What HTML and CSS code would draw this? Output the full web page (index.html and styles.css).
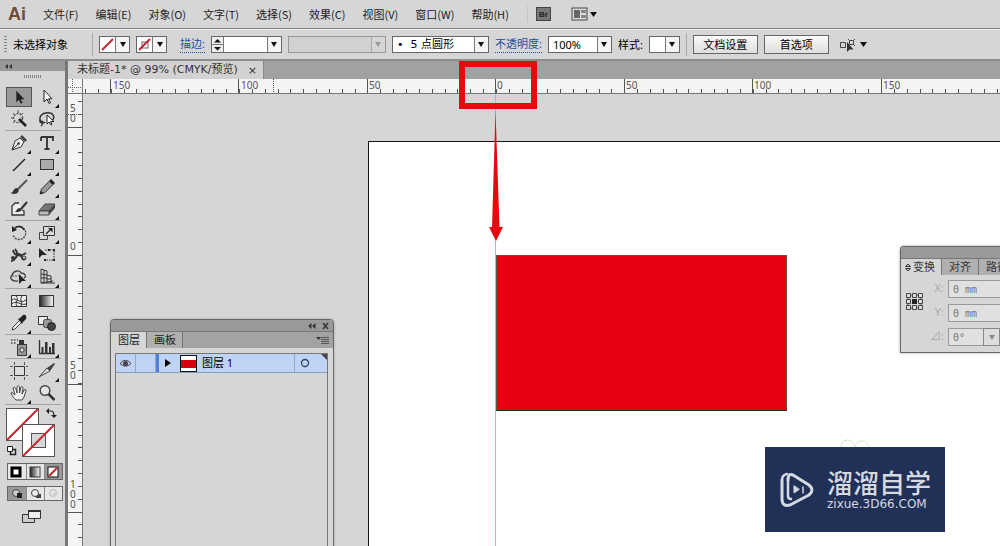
FILE: index.html
```html
<!DOCTYPE html>
<html lang="zh-CN">
<head>
<meta charset="utf-8">
<title>未标题-1*</title>
<link rel="stylesheet" href="styles.css">
</head>
<body>
<div class="app">
  <nav class="menubar">
    <span class="logo">Ai</span>
    <div class="menus">
      <button>文件(F)</button><button>编辑(E)</button><button>对象(O)</button><button>文字(T)</button><button>选择(S)</button><button>效果(C)</button><button>视图(V)</button><button>窗口(W)</button><button>帮助(H)</button>
    </div>
    <button class="bridge">Br</button>
    <button class="arrange" aria-label="排列文档">
      <svg width="26" height="14" viewBox="0 0 26 14"><rect x="1" y="1" width="15" height="12" fill="#ddd" stroke="#444"/><path d="M3 3h6v8H3z" fill="#666"/><path d="M10 3h5v3h-5zM10 8h5v3h-5z" fill="#888"/><path d="M19 5h7l-3.500 5z" fill="#111"/></svg>
    </button>
  </nav>

  <div class="controlbar">
    <i class="grip"></i>
    <span class="selection">未选择对象</span>
    <div class="controls">
      <button class="swatch" aria-label="填色"><svg width="15" height="15"><path d="M2 13L13 2" stroke="#c1272d" stroke-width="2"/></svg><i class="caret"></i></button>
      <button class="swatch" aria-label="描边颜色"><svg width="15" height="15"><rect x="5" y="5" width="6" height="6" fill="none" stroke="#666"/><path d="M2 13L13 2" stroke="#c1272d" stroke-width="2"/></svg><i class="caret"></i></button>
      <label class="link stroke-label" for="weight">描边:</label>
      <span class="spin"><button class="step" aria-label="增减"><svg width="11" height="15"><path d="M2 5.500L5.500 2 9 5.500zM2 10L5.500 13.500 9 10z" fill="#111"/><path d="M0 7.500h11" stroke="#777"/></svg></button><input id="weight" type="text"><i class="caret"></i></span>
      <span class="combo off"><select disabled aria-label="变量宽度"><option></option></select><i class="caret"></i></span>
      <span class="combo brush"><select aria-label="画笔定义"><option>•&nbsp; 5 点圆形</option></select><i class="caret"></i></span>
      <label class="link" for="opacity">不透明度:</label>
      <span class="combo opacity"><select id="opacity"><option>100%</option></select><i class="caret"></i></span>
      <label for="style">样式:</label>
      <button id="style" class="swatch" aria-label="样式"><svg width="15" height="15"></svg><i class="caret"></i></button>
    </div>
    <div class="actions">
      <button class="push">文档设置</button>
      <button class="push">首选项</button>
      <button class="similar" aria-label="选择类似的对象"><svg width="28" height="16" viewBox="0 0 28 16"><path d="M1.500 5.500h5v5h-5zM10.500 3.500h4v4h-4zM9 2l1.500 1.500M16 2l-1.500 1.500M16 9l-1.500-1.500" fill="none" stroke="#444"/><path d="M8 5v10l2.500-2.500h4z" fill="#333"/><path d="M21 5h7l-3.500 5z" fill="#111"/></svg></button>
    </div>
  </div>

  <div class="work">
    <aside class="toolbox">
      <button class="collapse" aria-label="折叠"><svg width="9" height="5"><path d="M4 0v5L1 2.500zM8 0v5L5 2.500z" fill="#333"/></svg></button>
      <i class="handle"></i>
      <div class="tools">
        <button class="tool on" aria-label="选择"><svg viewBox="0 0 20 20"><path d="M7 3v13l3-3 2 4.500 2-1-2-4h4z" fill="#222"/></svg></button>
        <button class="tool more" aria-label="直接选择"><svg viewBox="0 0 20 20"><path d="M7 3v12l3-3 2 4.500 1.500-.7-2-4H15z" fill="#fff" stroke="#222"/></svg></button>
        <button class="tool" aria-label="魔棒"><svg viewBox="0 0 20 20"><circle cx="9" cy="9" r="4.500" fill="none" stroke="#555" stroke-width="1.500" stroke-dasharray="2 1.200"/><path d="M9 1v3M2 9h2M4 4l1.500 1.500M14 4l-1.500 1.500M4 14l1.500-1.500" stroke="#555"/><path d="M10 10l7 7" stroke="#222" stroke-width="2.500"/></svg></button>
        <button class="tool" aria-label="套索"><svg viewBox="0 0 20 20"><path d="M6 13c-5-1-4-8 3-9 8-1 10 5 5 8M3 11c-1 3 3 4 5 2M6 12c-1 2 0 4-2 5" fill="none" stroke="#333" stroke-width="1.500"/><path d="M10 6v9l2-2 2 3 1-.5-1.500-3H17z" fill="#fff" stroke="#222"/></svg></button>
      </div>
      <div class="tools">
        <button class="tool more" aria-label="钢笔"><svg viewBox="0 0 20 20"><path d="M3 17l3-9 5-3 4 4-3 5z" fill="#eee" stroke="#333"/><path d="M11 4l2-2 5 5-2 2z" fill="#444"/><path d="M3 17l6-6" stroke="#333"/><circle cx="9.500" cy="10.500" r="1.300" fill="#333"/></svg></button>
        <button class="tool more" aria-label="文字"><svg viewBox="0 0 20 20"><path d="M4 4h12v4M4 4v4M10 4v12M7.500 16h5" fill="none" stroke="#333" stroke-width="1.800"/></svg></button>
        <button class="tool more" aria-label="直线段"><svg viewBox="0 0 20 20"><path d="M4 16L16 4" stroke="#222" stroke-width="1.400"/></svg></button>
        <button class="tool more" aria-label="矩形"><svg viewBox="0 0 20 20"><rect x="3.500" y="4.500" width="13" height="10" fill="#aaa" stroke="#333"/></svg></button>
        <button class="tool" aria-label="画笔"><svg viewBox="0 0 20 20"><path d="M18 3L9 12" stroke="#555" stroke-width="2"/><path d="M1 16c4 0 3-5 7-5 3 1 2 6-3 6z" fill="#333"/></svg></button>
        <button class="tool more" aria-label="铅笔"><svg viewBox="0 0 20 20"><path d="M3 17l1.500-5 8-8 3.500 3.500-8 8z" fill="#999" stroke="#333"/><path d="M12 4l2-2 4 4-2 2zM3 17l1-3 2 2z" fill="#222"/></svg></button>
        <button class="tool" aria-label="斑点画笔"><svg viewBox="0 0 20 20"><path d="M10 4H6l-3 3v9h12v-4l-2-1" fill="#eee" stroke="#333" stroke-width="1.300"/><path d="M18 3l-6 7" stroke="#333" stroke-width="2"/><path d="M5 13c3 0 2-4 6-4 3 1 1 4-2 4z" fill="#333"/></svg></button>
        <button class="tool more" aria-label="橡皮擦"><svg viewBox="0 0 20 20"><path d="M2 12l6-7h10l-6 7z" fill="#777" stroke="#444"/><path d="M2 12h10v4H2z" fill="#bbb" stroke="#444"/><path d="M12 12l6-7v4l-6 7z" fill="#444"/></svg></button>
      </div>
      <div class="tools">
        <button class="tool more" aria-label="旋转"><svg viewBox="0 0 20 20"><path d="M6 5a6.500 6.500 0 1 1-2 7" fill="none" stroke="#444" stroke-width="1.300" stroke-dasharray="2 1"/><path d="M6 5c4-3 8-1 9 2" fill="none" stroke="#222" stroke-width="1.600"/><path d="M3 3v6l5-2z" fill="#222"/></svg></button>
        <button class="tool more" aria-label="比例缩放"><svg viewBox="0 0 20 20"><path d="M2.500 9.500h8v7h-8z" fill="none" stroke="#444"/><path d="M6.500 3.500h11v9h-11z" fill="#ddd" stroke="#333"/><path d="M9 11l5-5" stroke="#222" stroke-width="1.300"/><path d="M11 5h4.500v4.500z" fill="#222"/></svg></button>
        <button class="tool more" aria-label="宽度"><svg viewBox="0 0 20 20"><path d="M2 16c6 0 4-7 8-7s1 7 6 5M4 5c1 5 6 8 13 3M6 4c2 2 3 5 1 9" fill="none" stroke="#333" stroke-width="1.800"/><circle cx="4" cy="13" r="2" fill="#333"/><circle cx="15" cy="13" r="2" fill="none" stroke="#333"/></svg></button>
        <button class="tool" aria-label="自由变换"><svg viewBox="0 0 20 20"><path d="M8 5h9v10H8" fill="none" stroke="#333" stroke-dasharray="1.500 1"/><path d="M2 3v10l3-3h5z" fill="#222"/><path d="M7 14h2v2H7zM16 14h2v2h-2zM16 4h2v2h-2zM11 4h2v2h-2z" fill="#222"/></svg></button>
        <button class="tool more" aria-label="形状生成器"><svg viewBox="0 0 20 20"><path d="M9 14c-6 1-9-3-6-6 2-5 8-5 9-2 5 0 5 4 3 5" fill="none" stroke="#444" stroke-width="1.300"/><path d="M3 9h9" stroke="#444" stroke-dasharray="2 1"/><path d="M10 7v10l3-3h4z" fill="#222"/></svg></button>
        <button class="tool more" aria-label="透视网格"><svg viewBox="0 0 20 20"><path d="M4 2v14h14M4 2l6 2v12M7 3v13M4 7l6 1M4 11h6M10 8l4 1v7M10 12h4M4 16l12-2" fill="none" stroke="#333"/></svg></button>
      </div>
      <div class="tools">
        <button class="tool" aria-label="网格"><svg viewBox="0 0 20 20"><path d="M2.500 4.500h15v11h-15z" fill="#eee" stroke="#333"/><path d="M3 9c4-4 7 5 14 0M3 13c4-5 8 2 14 0M7 5c4 4-2 6 1 10M13 5c-3 3 1 7-1 10" fill="none" stroke="#333"/></svg></button>
        <button class="tool" aria-label="渐变"><svg viewBox="0 0 20 20"><defs><linearGradient id="g"><stop stop-color="#222"/><stop offset="1" stop-color="#fff"/></linearGradient></defs><rect x="2.500" y="4.500" width="14" height="11" fill="url(#g)" stroke="#333"/></svg></button>
        <button class="tool more" aria-label="吸管"><svg viewBox="0 0 20 20"><path d="M3 17l1-3 7-7 2 2-7 7z" fill="#eee" stroke="#444"/><path d="M9 6l2-1 3-3c3-1 4 2 3 4l-3 3-1 2z" fill="#222"/></svg></button>
        <button class="tool" aria-label="混合"><svg viewBox="0 0 20 20"><path d="M1.500 3.500h9v8h-9z" fill="#eee" stroke="#333"/><rect x="6.500" y="6.500" width="8" height="8" rx="2" fill="#999" stroke="#444"/><circle cx="14.500" cy="13.500" r="4" fill="#444" stroke="#222"/></svg></button>
      </div>
      <div class="tools">
        <button class="tool more" aria-label="符号喷枪"><svg viewBox="0 0 20 20"><path d="M2 3h7M2 6h6" stroke="#444" stroke-width="1.500" stroke-dasharray="1.500 1.500"/><path d="M8.500 7.500h9v11h-9z" fill="#999" stroke="#333"/><path d="M10 3h5v4h-5z" fill="#333"/><circle cx="13" cy="13" r="2.200" fill="#ddd" stroke="#333"/></svg></button>
        <button class="tool more" aria-label="柱形图"><svg viewBox="0 0 20 20"><path d="M2.500 3v13.500H18" fill="none" stroke="#333" stroke-width="1.300"/><path d="M4.500 10h2v6h-2zM8 5h2.500v11H8zM12 10h2v6h-2zM15 6h2.500v10H15z" fill="#333"/></svg></button>
      </div>
      <div class="tools">
        <button class="tool" aria-label="画板"><svg viewBox="0 0 20 20"><path d="M5.500 5.500h10v9h-10z" fill="#ddd" stroke="#333"/><path d="M5.500 1v3M15.500 1v3M5.500 16v3M15.500 16v3M1 5.500h3M1 14.500h3M17 5.500h2M17 14.500h2" stroke="#555"/></svg></button>
        <button class="tool more" aria-label="切片"><svg viewBox="0 0 20 20"><path d="M2 16l8-9 3 3z" fill="#ddd" stroke="#444"/><path d="M10 7l7-5 1 1-5 7z" fill="#444"/></svg></button>
        <button class="tool more" aria-label="抓手"><svg viewBox="0 0 20 20"><path d="M7 17c-2-2-4-4-5-7 1-1 2 0 4 2L4 5c1-1 2-1 3 1l1 4V4c1-2 2-1 2.500 0v6l1.500-6c1-1 2 0 2 1l-1 6 2-4c2-1 2 0 2 1l-2 6-2 3z" fill="#eee" stroke="#444"/></svg></button>
        <button class="tool" aria-label="缩放"><svg viewBox="0 0 20 20"><circle cx="8" cy="7.500" r="4.800" fill="#e4e4e4" stroke="#444" stroke-width="1.400"/><path d="M11.500 11l6 6" stroke="#333" stroke-width="2.500"/></svg></button>
      </div>
      <div class="paint">
        <svg width="54" height="52" viewBox="0 0 54 52">
          <rect x=".5" y="1.500" width="32" height="32" fill="#fff" stroke="#555"/><path d="M1 33L32 2" stroke="#c1272d" stroke-width="2"/>
          <rect x="16.500" y="17.500" width="32" height="32" fill="#fff" stroke="#555"/><rect x="25.500" y="26.500" width="14" height="14" fill="#d6d6d6" stroke="#555"/><path d="M17 49L48 18" stroke="#c1272d" stroke-width="2"/>
          <path d="M42 4h3q3 0 3 5" fill="none" stroke="#222" stroke-width="1.200"/><path d="M40 4l3-3v6zM45 8h6l-3 3z" fill="#222"/>
          <path d="M4.500 42.500h5v5h-5z" fill="#ddd" stroke="#222" stroke-width="1.500"/><path d="M1.500 39.500h5v5h-5z" fill="#fff" stroke="#222"/>
        </svg>
      </div>
      <div class="modes color">
        <button aria-label="颜色"><svg width="16" height="14"><rect x="4" y="3" width="8" height="8" fill="#fff" stroke="#000" stroke-width="3"/></svg></button>
        <button aria-label="渐变色"><svg width="16" height="14"><rect x="3" y="2" width="10" height="10" fill="url(#g)" stroke="#333"/></svg></button>
        <button class="on" aria-label="无"><svg width="16" height="14"><rect x="3" y="2" width="10" height="10" fill="#fff" stroke="#111"/><path d="M4 11l8-8" stroke="#c1272d" stroke-width="2"/></svg></button>
      </div>
      <div class="modes">
        <button class="on" aria-label="正常绘图"><svg width="16" height="13"><circle cx="8" cy="6" r="3.500" fill="#ccc" stroke="#444"/><path d="M9 6h5v5H9z" fill="#222"/></svg></button>
        <button aria-label="背面绘图"><svg width="16" height="13"><path d="M9 7h5v4H9z" fill="#444"/><circle cx="8" cy="6" r="3.500" fill="#eee" stroke="#444"/></svg></button>
        <button aria-label="内部绘图"><svg width="16" height="13"><circle cx="8" cy="6" r="3.500" fill="none" stroke="#bbb"/><path d="M8 6h3v3H8z" fill="#ccc"/></svg></button>
      </div>
      <button class="screen" aria-label="屏幕模式"><svg width="20" height="15"><path d="M.5 5.500h12v8H.5z" fill="#ccc" stroke="#333"/><path d="M6.500 1.500h12v8h-12z" fill="#eee" stroke="#333"/><path d="M6 2h13" stroke="#333" stroke-width="2"/></svg></button>
    </aside>

    <main class="document">
      <div class="tabs"><div class="tab">未标题-1* @ 99% (CMYK/预览)<button aria-label="关闭">×</button></div></div>
      <div class="stage">
        <svg class="corner" width="14" height="14"><path d="M0 8.500h14M4.500 0v14" stroke="#666" stroke-dasharray="1 1"/></svg>
        <svg class="ruler-h" width="100%" height="14" shape-rendering="crispEdges">
          <line x1="2" y1="12" x2="4000" y2="12" stroke="#555" stroke-width="4" stroke-dasharray="1 11.840"/>
          <path d="M27.500 0v14M155.500 0v14M284.500 0v14M412.500 0v14M541.500 0v14M669.500 0v14M798.500 0v14" stroke="#555"/>
          <path d="M190.500 0v14" stroke="#555" stroke-dasharray="1 1"/>
          <g class="marks"><text x="30" y="10">150</text><text x="158" y="10">100</text><text x="286" y="10">50</text><text x="414" y="10">0</text><text x="543" y="10">50</text><text x="671" y="10">100</text><text x="800" y="10">150</text></g>
        </svg>
        <svg class="ruler-v" width="14" height="100%" shape-rendering="crispEdges">
          <line x1="12" y1="7" x2="12" y2="4000" stroke="#555" stroke-width="4" stroke-dasharray="1 11.830"/>
          <path d="M0 33.500h14M0 161.500h14M0 290.500h14M0 418.500h14" stroke="#555"/>
          <path d="M0 20.500h14" stroke="#555" stroke-dasharray="1 1"/>
          <g class="marks"><text x="2" y="18">5</text><text x="2" y="28">0</text><text x="2" y="156">0</text><text x="2" y="275">5</text><text x="2" y="285">0</text><text x="2" y="394">1</text><text x="2" y="404">0</text><text x="2" y="414">0</text></g>
        </svg>
        <div class="canvas">
          <div class="artboard"></div>
          <div class="flag"></div>
          <div class="guide"></div>
        </div>
      </div>
    </main>
  </div>

  <div class="callout"></div>
  <svg class="pointer" width="16" height="132" viewBox="0 0 16 132"><path d="M7.500 0L11.500 117H15L8 131 1 117h3z" fill="#e60a0f"/></svg>

  <section class="panel layers">
    <div class="panel-top"><svg width="22" height="8"><path d="M3.500 1v6L0 4zM7.500 1v6L4 4z" fill="#333"/><path d="M15 1l5 6M20 1l-5 6" stroke="#333" stroke-width="1.500"/></svg></div>
    <div class="panel-tabs"><button class="on">图层</button><button>画板</button><svg width="13" height="8"><path d="M0 1h5L2.500 4z" fill="#333"/><path d="M5 1.500h8M5 3.500h8M5 5.500h8M5 7.500h8" stroke="#555"/></svg></div>
    <div class="layer-list">
      <div class="layer">
        <button class="eye" aria-label="可见性"><svg width="13" height="9"><path d="M1 4.500Q6.500-2 12 4.500 6.500 10 1 4.500z" fill="#ccd" stroke="#445"/><circle cx="6.500" cy="4.500" r="2.500" fill="#445"/></svg></button>
        <i class="lock"></i><i class="bar"></i>
        <svg class="open" width="6" height="8"><path d="M0 0l6 4-6 4z"/></svg>
        <i class="thumb"></i>
        <span class="name">图层 1</span>
        <button class="target" aria-label="定位"><svg width="10" height="10"><circle cx="5" cy="5" r="3.500" fill="none" stroke="#345" stroke-width="1.300"/></svg></button>
      </div>
    </div>
  </section>

  <section class="panel transform">
    <div class="panel-top"></div>
    <div class="panel-tabs"><button class="on"><svg width="6" height="9"><path d="M.5 3.500L3 1l2.500 2.500zM.5 5.500L3 8l2.500-2.500z" fill="none" stroke="#333"/></svg>变换</button><button>对齐</button><button>路径</button></div>
    <div class="fields">
      <svg width="19" height="19" viewBox="0 0 19 19"><path d="M3 3h13v13H3z" fill="none" stroke="#555"/><path d="M1.500 1.500h4v4h-4zM7.500 1.500h4v4h-4zM13.500 1.500h4v4h-4zM1.500 7.500h4v4h-4zM13.500 7.500h4v4h-4zM1.500 13.500h4v4h-4zM7.500 13.500h4v4h-4zM13.500 13.500h4v4h-4z" fill="#ddd" stroke="#444"/><path d="M7 7h5v5H7z" fill="#222"/></svg>
      <div class="rows">
        <label>X:<input type="text" value="0 mm"></label>
        <label>Y:<input type="text" value="0 mm"></label>
        <label>⊿:<input class="angle" type="text" value="0°"><i class="caret"></i></label>
      </div>
    </div>
  </section>

  <svg class="petals" width="36" height="14"><path d="M3 14Q2 2 9 2t7 7M17 9q2-7 9-6 5 2 5 10" fill="none" stroke="#dcdce2"/></svg>
  <div class="brand">
    <svg width="36" height="38" viewBox="0 0 36 38" fill="none" stroke="#d5d9e2" stroke-linecap="round" stroke-linejoin="round"><path d="M9 9V25q0 3 3 3" stroke-width="2.500"/><path d="M3 9V28q0 8 8 6l19-10q6-5 0-10L14 4Q9 2 9 9" stroke-width="3"/><path d="M3 9q0-5 5-6" stroke-width="2.500"/><path d="M15 15v7l5-3.500z" fill="#d5d9e2" stroke-width="1"/><path d="M24 16v6" stroke-width="1.500"/></svg>
    <div><strong>溜溜自学</strong><span>zixue.3D66.COM</span></div>
  </div>
</div>
</body>
</html>
```
FILE: styles.css
```css
* { box-sizing: border-box; }
body { margin: 0; font: 11px/16px "Noto Sans", "Noto Sans CJK SC", sans-serif; color: #222; }
button, input, select { font: inherit; color: inherit; margin: 0; padding: 0; border: 0; background: none; border-radius: 0; appearance: none; }
svg { display: block; flex: none; }
i { display: block; flex: none; }
.app { position: relative; display: flex; flex-direction: column; height: 100vh; overflow: hidden; background: #d6d6d6; }

.menubar { display: flex; align-items: center; height: 29px; padding-left: 8px; border-bottom: 1px solid #858585; flex: none; }
.logo { width: 35px; font: bold 18px/24px "Liberation Sans", sans-serif; color: #6e4c38; }
.menus { display: flex; gap: 17px; padding-right: 18px; border-right: 1px solid #c6c6c6; font-family: "Noto Sans CJK SC", sans-serif; }
.menus button { white-space: nowrap; }
.bridge { width: 15px; height: 14px; margin: 0 20px 0 8px; background: #777; border: 1px solid #444; font: bold 8px/11px "Liberation Sans", sans-serif; }

.controlbar { display: flex; align-items: center; height: 32px; padding-left: 4px; border-top: 1px solid #eee; border-bottom: 2px solid #8d8d8d; flex: none; color: #000; white-space: nowrap; }
.grip { width: 3px; height: 18px; margin-right: 6px; background: repeating-linear-gradient(#888 0 1px, transparent 1px 3px); }
.selection { width: 79px; }
.controls { display: flex; align-items: center; gap: 6px; padding: 0 6px; height: 23px; border-left: 1px solid #aaa; border-right: 1px solid #aaa; }
.swatch, .combo, .spin { display: flex; align-items: stretch; height: 17px; border: 1px solid #666; background: #fff; }
.caret { display: flex; align-items: center; justify-content: center; width: 14px; border-left: 1px solid #777; background: #f4f4f4; }
.caret::after { content: ""; border: 3px solid transparent; border-top: 5px solid #111; border-bottom: 0; }
.link { color: #1d4f9f; border-bottom: 1px dotted #1d4f9f; }
.stroke-label { margin-left: 7px; }
.step { border-right: 1px solid #777; background: #eee; }
.spin input { width: 43px; }
.combo select { flex: 1; min-width: 0; padding-left: 4px; line-height: 14px; opacity: 1; }
.off { width: 98px; border-color: #999; background: #d2d2d2; }
.off .caret { background: #d6d6d6; border-color: #aaa; }
.off .caret::after { border-top-color: #999; }
.brush { width: 97px; }
.brush select { font-family: "DejaVu Sans", "Noto Sans CJK SC", sans-serif; }
.opacity { width: 64px; }
.actions { display: flex; align-items: center; gap: 6px; padding-left: 6px; }
.push { width: 65px; height: 19px; border: 1px solid #666; background: linear-gradient(#fafafa, #dedede); }
.similar { margin-left: 4px; }

.work { display: flex; flex: 1; min-height: 0; }
.toolbox { width: 68px; border-right: 3px solid #777; flex: none; overflow: hidden; }
.collapse { display: flex; align-items: center; width: 100%; height: 10px; padding-left: 4px; background: #999; }
.handle { width: 18px; height: 3px; margin: 4px 0 8px 24px; background: repeating-linear-gradient(90deg, #888 0 1px, transparent 1px 2px); }
.tools { display: grid; grid-template-columns: 28px 28px; margin: 0 4px 1px 5px; border-bottom: 1px solid #a5a5a5; }
.tool { position: relative; display: grid; place-items: center; height: 22px; }
.tool svg { width: 20px; height: 20px; }
.tool.on { margin: 1px; height: 20px; background: #999; border: 1px solid #555; }
.tool.on svg { height: 18px; }
.more::after { content: ""; position: absolute; right: 2px; bottom: 0; border: 2px solid #111; border-top-color: transparent; border-left-color: transparent; }
.paint { padding: 1px 0 4px 6px; }
.modes { display: grid; grid-template-columns: repeat(3, 18px); width: 56px; margin: 0 0 6px 7px; border: 1px solid #666; background: #e6e6e6; }
.modes button + button { border-left: 1px solid #888; }
.modes .on { background: #999; }
.color button { height: 15px; }
.screen { margin: 2px 0 0 22px; }

.document { display: flex; flex-direction: column; flex: 1; min-width: 0; }
.tabs { display: flex; height: 18px; background: #a1a1a1; flex: none; }
.tab { display: flex; gap: 10px; padding: 1px 6px 0 9px; background: #d2d2d2; border-right: 1px solid #888; color: #333; white-space: nowrap; font-family: "DejaVu Sans", "Noto Sans CJK SC", sans-serif; }
.stage { display: grid; grid-template: 15px 1fr / 15px 1fr; flex: 1; min-height: 0; }
.corner, .ruler-h, .ruler-v { background: #f4f4f4; overflow: hidden; box-sizing: content-box; min-width: 0; }
.corner, .ruler-h { border-bottom: 1px solid #777; }
.corner, .ruler-v { border-right: 1px solid #777; }
.marks { font: 10px "Noto Sans", sans-serif; fill: #555; }
.canvas { position: relative; overflow: hidden; min-width: 0; }
.artboard { position: absolute; left: 285px; top: 47px; right: 0; bottom: 0; background: #fff; border: solid #111; border-width: 1px 0 0 1px; }
.flag { position: absolute; left: 413px; top: 161px; width: 291px; height: 156px; background: #e60012; border: 1px solid #66524a; border-bottom-color: #222; }
.guide { position: absolute; left: 412px; top: 0; bottom: 0; width: 1px; background: #4fe0ea; }

.callout { position: absolute; left: 459px; top: 61px; width: 78px; height: 48px; border: 6px solid #e60a0f; }
.pointer { position: absolute; left: 488px; top: 110px; }

.panel { position: absolute; display: flex; flex-direction: column; background: #d6d6d6; border: 1px solid #666; border-radius: 4px 4px 0 0; overflow: hidden; box-shadow: 0 0 3px #aaa; }
.panel-top { display: flex; align-items: center; justify-content: flex-end; height: 12px; padding-right: 3px; background: #999; border-bottom: 1px solid #777; flex: none; }
.panel-tabs { display: flex; align-items: center; height: 16px; background: #a3a3a3; flex: none; }
.panel-tabs button { display: flex; align-items: center; gap: 2px; height: 16px; padding: 0 6px; background: #b0b0b0; border-right: 1px solid #777; white-space: nowrap; flex: none; }
.panel-tabs .on { background: #d6d6d6; }
.layers { left: 110px; top: 319px; bottom: -10px; width: 224px; }
.layers .panel-tabs button { padding: 0 6px 0 7px; }
.layers .panel-tabs > svg { margin: 0 4px 0 auto; }
.layer-list { flex: 1; margin: 5px 5px 0 4px; border: 1px solid #777; }
.layer { position: relative; display: flex; align-items: center; height: 19px; background: #bfd3f4; border-bottom: 1px solid #8b9dbd; color: #000; }
.layer::after { content: ""; position: absolute; right: 0; top: 0; border: 3px solid #444; border-left-color: transparent; border-bottom-color: transparent; }
.eye { width: 20px; height: 100%; padding-left: 3px; border-right: 1px solid #93a7ca; }
.lock { width: 20px; height: 100%; border-right: 1px solid #93a7ca; }
.bar { width: 3px; height: 100%; background: #4f7fd9; }
.open { margin: 0 9px 0 6px; }
.thumb { width: 17px; height: 17px; border: 1px solid #111; background: linear-gradient(#fff 0 4px, #d9000f 4px 12px, #fff 12px); }
.name { flex: 1; padding-left: 5px; }
.target { width: 33px; height: 100%; padding-left: 5px; border-left: 1px solid #93a7ca; }

.transform { left: 900px; top: 246px; right: 0; border-right: 0; border-top-right-radius: 0; color: #333; }
.transform .panel-tabs button { padding: 0 7px; }
.transform .panel-tabs .on { padding: 0 6px 0 4px; }
.fields { display: flex; align-items: flex-start; gap: 8px; padding: 5px 0 6px 4px; }
.fields > svg { margin-top: 12px; }
.rows { display: flex; flex-direction: column; gap: 6px; flex: 1; min-width: 0; }
.rows label { display: flex; align-items: stretch; justify-content: flex-end; gap: 4px; height: 18px; color: #aaa; }
.rows input { width: 52px; padding-left: 4px; border: 1px solid #999; border-right: 0; background: #e0e0e0; color: #777; font: 10px "DejaVu Sans Mono", monospace; }
.rows .angle { width: 35px; }
.rows .caret { margin-left: -4px; border: 1px solid #888; width: 17px; background: #ddd; }
.rows .caret::after { border-top-color: #888; }

.petals { position: absolute; left: 838px; top: 438px; }
.brand { position: absolute; left: 765px; top: 447px; display: flex; align-items: center; gap: 12px; width: 180px; height: 85px; padding-left: 14px; background: #213057; color: #d5d9e2; white-space: nowrap; }
.brand strong { display: block; font-size: 26px; line-height: 28px; font-weight: 500; }
.brand span { display: block; font: 12px/14px "DejaVu Sans", sans-serif; }
```
